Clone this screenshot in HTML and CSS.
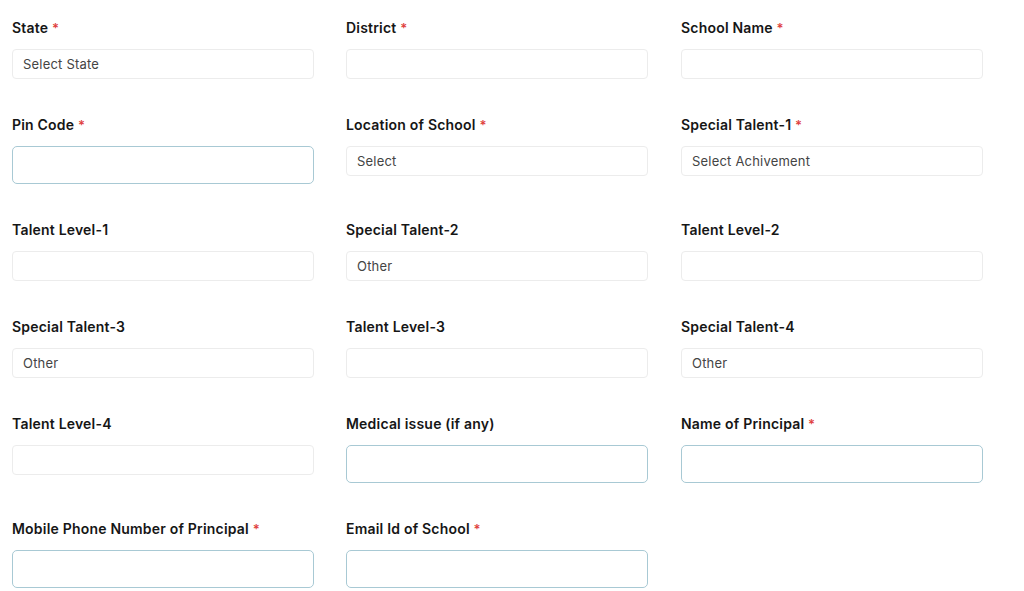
FILE: index.html
```html
<!DOCTYPE html>
<html lang="en">
<head>
  <meta charset="UTF-8" />
  <title>School Details</title>
  <link rel="stylesheet" href="styles.css">
</head>
<body>

  <form class="school-form">
    <div class="field">
      <label>State <span class="req">*</span></label>
      <div class="box">Select State</div>
    </div>
    <div class="field">
      <label>District <span class="req">*</span></label>
      <div class="box"></div>
    </div>
    <div class="field">
      <label>School Name <span class="req">*</span></label>
      <div class="box"></div>
    </div>

    <div class="field">
      <label>Pin Code <span class="req">*</span></label>
      <div class="box tall"></div>
    </div>
    <div class="field">
      <label>Location of School <span class="req">*</span></label>
      <div class="box">Select</div>
    </div>
    <div class="field">
      <label>Special Talent-1 <span class="req">*</span></label>
      <div class="box">Select Achivement</div>
    </div>

    <div class="field">
      <label>Talent Level-1</label>
      <div class="box"></div>
    </div>
    <div class="field">
      <label>Special Talent-2</label>
      <div class="box">Other</div>
    </div>
    <div class="field">
      <label>Talent Level-2</label>
      <div class="box"></div>
    </div>

    <div class="field">
      <label>Special Talent-3</label>
      <div class="box">Other</div>
    </div>
    <div class="field">
      <label>Talent Level-3</label>
      <div class="box"></div>
    </div>
    <div class="field">
      <label>Special Talent-4</label>
      <div class="box">Other</div>
    </div>

    <div class="field">
      <label>Talent Level-4</label>
      <div class="box"></div>
    </div>
    <div class="field">
      <label>Medical issue (if any)</label>
      <div class="box tall"></div>
    </div>
    <div class="field">
      <label>Name of Principal <span class="req">*</span></label>
      <div class="box tall"></div>
    </div>

    <div class="field">
      <label>Mobile Phone Number of Principal <span class="req">*</span></label>
      <div class="box tall"></div>
    </div>
    <div class="field">
      <label>Email Id of School <span class="req">*</span></label>
      <div class="box tall"></div>
    </div>
  </form>

</body>
</html>
```

FILE: styles.css
```css
* {
  box-sizing: border-box;
}

body {
  margin: 0;
  background: #ffffff;
  font-family: 'Inter', 'Open Sans', sans-serif;
  color: #1a1a1a;
}

.school-form {
  display: grid;
  grid-template-columns: 302px 303px 302px;
  column-gap: 32px;
  padding: 18px 0 0 12px;
}

.field {
  margin-bottom: 36px;
}

.field:nth-last-child(-n+2) {
  margin-bottom: 0;
}

.field label {
  display: block;
  height: 20px;
  line-height: 20px;
  margin-bottom: 11px;
  font-size: 14px;
  font-weight: 600;
  letter-spacing: 0.2px;
  color: #161616;
}

.req {
  color: #e0413e;
  font-size: 13px;
}

.box {
  max-width: 302px;
  height: 30px;
  padding: 0 10px;
  line-height: 28px;
  border: 1px solid #ececec;
  border-radius: 4px;
  font-size: 13px;
  color: #444;
  letter-spacing: 0.2px;
}

.box.tall {
  height: 38px;
  border-color: #a8c9d4;
  border-radius: 5px;
}
```
